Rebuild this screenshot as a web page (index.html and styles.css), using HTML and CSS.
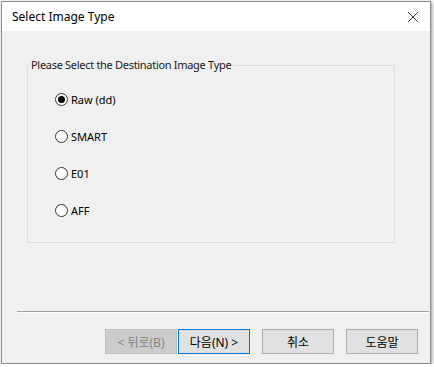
FILE: index.html
```html
<!DOCTYPE html>
<html>
  <head>
    <title>Select Image Type</title>
    <link rel="stylesheet" href="styles.css">
  </head>

  <body>
    <div class="dialog">
      <div class="titlebar">
        <span class="title">Select Image Type</span>
        <svg class="close" width="12" height="12" viewBox="0 0 12 12">
          <path d="M1 1 L11 11 M11 1 L1 11" stroke="#333" stroke-width="1" fill="none" />
        </svg>
      </div>

      <div class="content">
        <fieldset class="group">
          <legend>Please Select the Destination Image Type</legend>
          <label class="option"><span class="radio checked"></span>Raw (dd)</label>
          <label class="option"><span class="radio"></span>SMART</label>
          <label class="option"><span class="radio"></span>E01</label>
          <label class="option"><span class="radio"></span>AFF</label>
        </fieldset>

        <div class="separator"></div>

        <div class="buttons">
          <button class="btn disabled">&lt; 뒤로(B)</button>
          <button class="btn focused">다음(N) &gt;</button>
          <button class="btn spaced">취소</button>
          <button class="btn spaced">도움말</button>
        </div>
      </div>
    </div>
  </body>
</html>
```

FILE: styles.css
```css
:root {
  --face: #f0f0f0;
  --ui-font: "Noto Sans", "Noto Sans CJK KR", sans-serif;
}

body {
  margin: 0;
  background: #ffffff;
  font-family: var(--ui-font);
  font-size: 11px;
  color: #000;
}

.dialog {
  margin: 1px 0 0 1px;
  width: 430px;
  height: 363px;
  box-sizing: border-box;
  border: 1px solid #8c8c8c;
  box-shadow: 1px 1px 3px rgba(0, 0, 0, 0.45);
  background: var(--face);
  display: flex;
  flex-direction: column;
}

.titlebar {
  height: 29px;
  background: #fff;
  display: flex;
  align-items: center;
  justify-content: space-between;
  padding: 0 11px 0 10px;
}
.title {
  font-size: 12px;
  color: #000;
}
.close {
  display: block;
}

.content {
  flex: 1;
  display: flex;
  flex-direction: column;
  padding: 26px 12px 9px 25px;
}

.group {
  margin: 0;
  width: 368px;
  box-sizing: border-box;
  border: 1px solid #dcdcdc;
  padding: 8px 0 13px 27px;
}
.group legend {
  padding: 0 2px;
  margin-left: -26px;
  line-height: 16px;
  letter-spacing: -0.3px;
  color: #1a1a1a;
}

.option {
  display: flex;
  align-items: center;
  height: 37px;
  gap: 3px;
}

.radio {
  width: 11px;
  height: 11px;
  border: 1px solid #333;
  border-radius: 50%;
  background: #fff;
  display: flex;
  align-items: center;
  justify-content: center;
}
.radio.checked::after {
  content: "";
  width: 7px;
  height: 7px;
  border-radius: 50%;
  background: #000;
}

.separator {
  margin: auto -11px 0 -10px;
  height: 1px;
  background: #a0a0a0;
  border-bottom: 1px solid #fff;
}

.buttons {
  margin-top: 16px;
  display: flex;
  justify-content: flex-end;
  gap: 1px;
}

.btn {
  width: 72px;
  height: 25px;
  box-sizing: border-box;
  border: 1px solid #adadad;
  background: #e1e1e1;
  font-family: var(--ui-font);
  font-size: 12px;
  color: #000;
  padding: 0;
}
.btn.disabled {
  background: #cccccc;
  border-color: #bfbfbf;
  color: #838383;
}
.btn.focused {
  border-color: #0078d7;
}
.btn.spaced {
  margin-left: 11px;
}
```
